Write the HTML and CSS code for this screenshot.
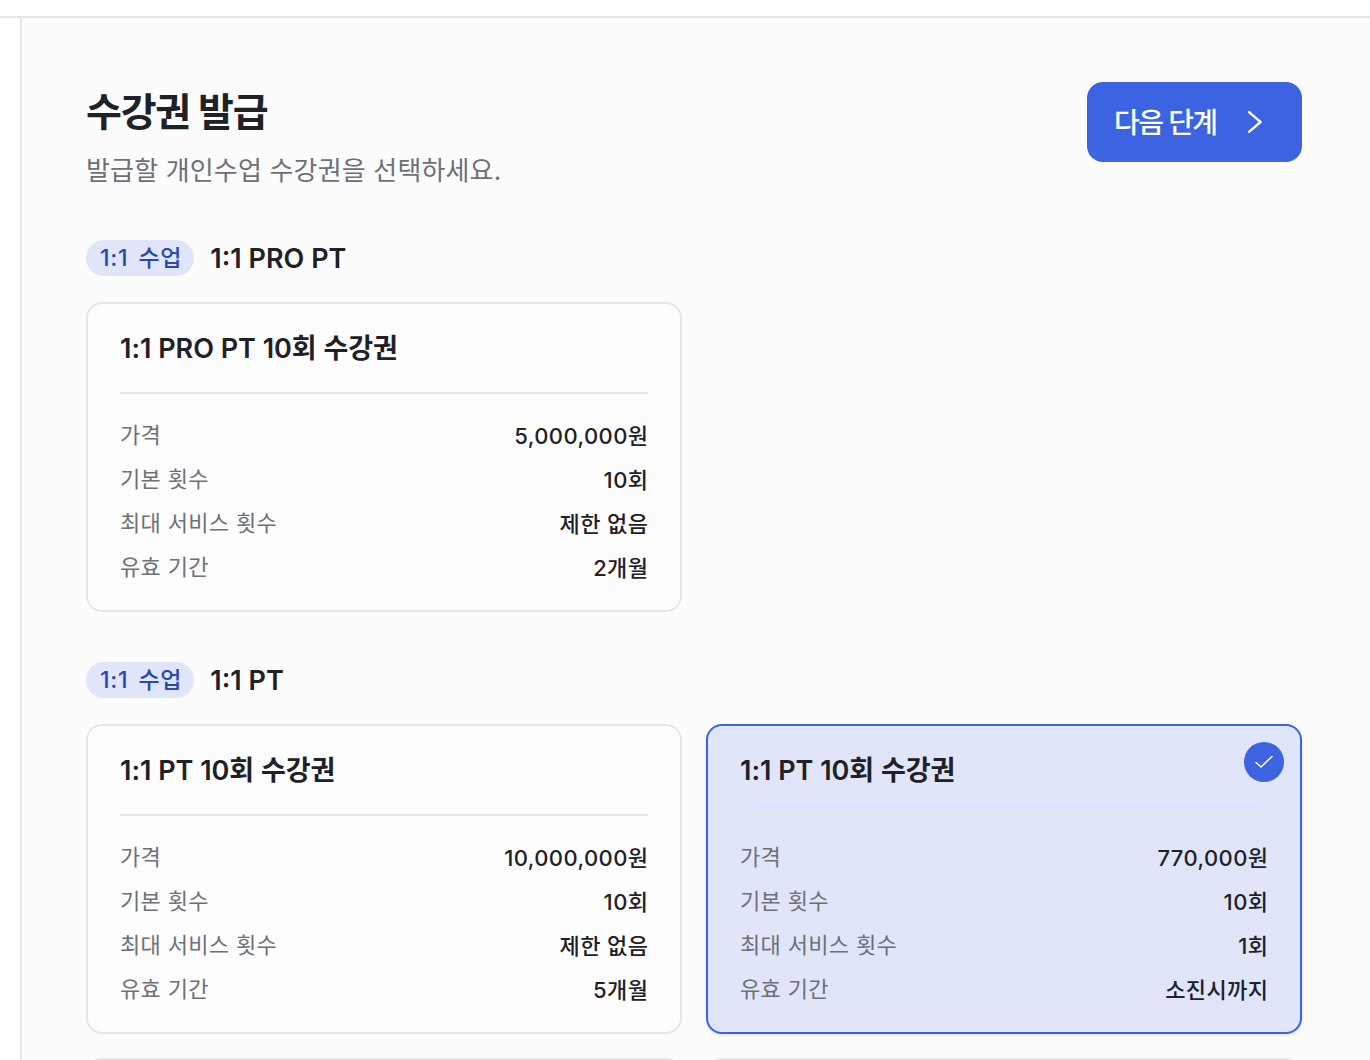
FILE: index.html
```html
<!DOCTYPE html>
<html lang="ko">
<head>
    <meta charset="UTF-8">
    <title>수강권 발급</title>
    <link rel="stylesheet" href="styles.css">
</head>
<body>
    <div class="topBar"></div>
    <div class="layout">
        <div class="sideBar"></div>
        <div class="main">
            <div class="pageHead">
                <div>
                    <h1 class="pageTitle">수강권 발급</h1>
                    <p class="pageDesc">발급할 개인수업 수강권을 선택하세요.</p>
                </div>
                <button class="nextBtn"><span class="nextText">다음 단계</span>
                    <svg class="nextIcon" width="24" height="24" viewBox="0 0 24 24"><path d="M8 2.2L19.6 12L8 21.8" fill="none" stroke="#fff" stroke-width="2.4" stroke-linecap="round" stroke-linejoin="round"/></svg>
                </button>
            </div>

            <div class="groupHead">
                <span class="badge">1:1 수업</span>
                <span class="groupName">1:1 PRO PT</span>
            </div>
            <div class="cardGrid">
                <div class="card">
                    <div class="cardTitle">1:1 PRO PT 10회 수강권</div>
                    <div class="row"><span class="rowLabel">가격</span><span class="rowValue">5,000,000원</span></div>
                    <div class="row"><span class="rowLabel">기본 횟수</span><span class="rowValue">10회</span></div>
                    <div class="row"><span class="rowLabel">최대 서비스 횟수</span><span class="rowValue">제한 없음</span></div>
                    <div class="row"><span class="rowLabel">유효 기간</span><span class="rowValue">2개월</span></div>
                </div>
            </div>

            <div class="groupHead">
                <span class="badge">1:1 수업</span>
                <span class="groupName">1:1 PT</span>
            </div>
            <div class="cardGrid">
                <div class="card">
                    <div class="cardTitle">1:1 PT 10회 수강권</div>
                    <div class="row"><span class="rowLabel">가격</span><span class="rowValue">10,000,000원</span></div>
                    <div class="row"><span class="rowLabel">기본 횟수</span><span class="rowValue">10회</span></div>
                    <div class="row"><span class="rowLabel">최대 서비스 횟수</span><span class="rowValue">제한 없음</span></div>
                    <div class="row"><span class="rowLabel">유효 기간</span><span class="rowValue">5개월</span></div>
                </div>
                <div class="card selected">
                    <span class="check">
                        <svg width="20" height="20" viewBox="0 0 20 20"><path d="M2 10.5L7 15L18 4.5" fill="none" stroke="#fff" stroke-width="1.6" stroke-linecap="round" stroke-linejoin="round"/></svg>
                    </span>
                    <div class="cardTitle">1:1 PT 10회 수강권</div>
                    <div class="row"><span class="rowLabel">가격</span><span class="rowValue">770,000원</span></div>
                    <div class="row"><span class="rowLabel">기본 횟수</span><span class="rowValue">10회</span></div>
                    <div class="row"><span class="rowLabel">최대 서비스 횟수</span><span class="rowValue">1회</span></div>
                    <div class="row"><span class="rowLabel">유효 기간</span><span class="rowValue">소진시까지</span></div>
                </div>
                <div class="card"></div>
                <div class="card"></div>
            </div>
        </div>
    </div>
</body>
</html>
```

FILE: styles.css
```css
*{
    padding: 0;
    margin: 0;
    box-sizing: border-box;
}
html,body{
    height: 1060px;
    overflow: hidden;
}
body{
    background-color: #fff;
    color: #1e2126;
    font-family: Inter, "Noto Sans CJK KR", sans-serif;
}
.topBar{
    height: 18px;
    border-bottom: 2px solid #e6e7ea;
    background-color: #fff;
}
.layout{
    display: flex;
    height: 1042px;
}
.sideBar{
    width: 22px;
    flex-shrink: 0;
    border-right: 2px solid #e6e7ea;
    background-color: #fff;
}
.main{
    flex: 1;
    padding: 64px 68px 0 64px;
    background-color: #fcfcfd;
    overflow: hidden;
}
.pageHead{
    display: flex;
    justify-content: space-between;
    align-items: flex-start;
}
.pageTitle{
    font-size: 39px;
    line-height: 56px;
    margin-top: 2px;
    font-weight: 700;
    letter-spacing: -1.2px;
}
.pageDesc{
    font-size: 26px;
    line-height: 36px;
    margin-top: 13px;
    color: #6c7079;
    letter-spacing: 0.16px;
}
.nextBtn{
    width: 215px;
    height: 80px;
    display: flex;
    align-items: center;
    gap: 24px;
    padding-left: 27px;
    border: 0;
    border-radius: 16px;
    background-color: #3c63e2;
    color: #fff;
    font-family: inherit;
    font-size: 28px;
    font-weight: 500;
    letter-spacing: -1.6px;
}
.nextText{
    margin-bottom: 2px;
}
.groupHead{
    display: flex;
    align-items: center;
    gap: 16px;
    margin-top: 51px;
    height: 36px;
}
.cardGrid + .groupHead{
    margin-top: 50px;
}
.badge{
    height: 36px;
    padding: 0 12px 0 14px;
    border-radius: 18px;
    background-color: #e0e5fa;
    color: #2a49b0;
    font-size: 23px;
    font-weight: 500;
    line-height: 36px;
    letter-spacing: 0.8px;
    word-spacing: 3px;
    white-space: nowrap;
}
.groupName{
    font-size: 27px;
    font-weight: 600;
}
.cardGrid{
    display: grid;
    grid-template-columns: 596px 596px;
    gap: 24px;
    margin-top: 26px;
}
.card{
    position: relative;
    height: 310px;
    padding: 27px 32px 0;
    border: 2px solid #e6e7ea;
    border-radius: 16px;
    background-color: #fdfdfe;
}
.card.selected{
    border-color: #3c63e2;
    background-color: #e0e5fa;
    box-shadow: 0 1px 3px rgba(0,0,0,0.12);
}
.cardTitle{
    height: 63px;
    margin-bottom: 17px;
    font-size: 27px;
    line-height: 36px;
    font-weight: 600;
    letter-spacing: -0.02px;
    border-bottom: 2px solid #e6e7ea;
}
.row{
    display: flex;
    justify-content: space-between;
    align-items: center;
    height: 44px;
    font-size: 22px;
    letter-spacing: 0.34px;
}
.rowLabel{
    color: #6c7079;
}
.rowValue{
    font-weight: 500;
    letter-spacing: 0.4px;
    margin-right: -0.4px;
    padding-top: 1px;
}
.check{
    position: absolute;
    top: 16px;
    right: 16px;
    width: 40px;
    height: 40px;
    display: flex;
    align-items: center;
    justify-content: center;
    border-radius: 50%;
    background-color: #3c63e2;
}
```
